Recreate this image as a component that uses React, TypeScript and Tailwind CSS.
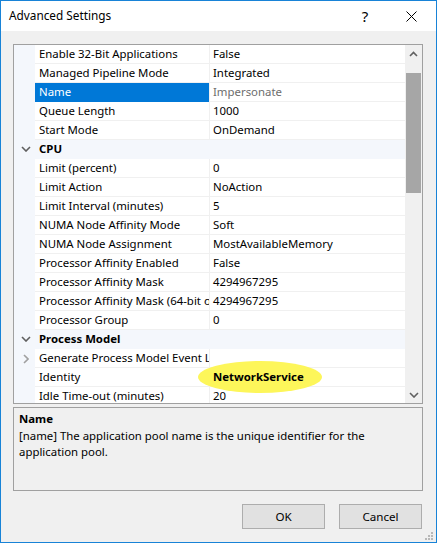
import React from "react"

type Row =
  | { kind: "cat"; label: string }
  | { kind: "item"; name: string; value: string; selected?: boolean; bold?: boolean; expander?: boolean; mark?: boolean }

const ROWS: Row[] = [
  { kind: "item", name: "Enable 32-Bit Applications", value: "False" },
  { kind: "item", name: "Managed Pipeline Mode", value: "Integrated" },
  { kind: "item", name: "Name", value: "Impersonate", selected: true },
  { kind: "item", name: "Queue Length", value: "1000" },
  { kind: "item", name: "Start Mode", value: "OnDemand" },
  { kind: "cat", label: "CPU" },
  { kind: "item", name: "Limit (percent)", value: "0" },
  { kind: "item", name: "Limit Action", value: "NoAction" },
  { kind: "item", name: "Limit Interval (minutes)", value: "5" },
  { kind: "item", name: "NUMA Node Affinity Mode", value: "Soft" },
  { kind: "item", name: "NUMA Node Assignment", value: "MostAvailableMemory" },
  { kind: "item", name: "Processor Affinity Enabled", value: "False" },
  { kind: "item", name: "Processor Affinity Mask", value: "4294967295" },
  { kind: "item", name: "Processor Affinity Mask (64-bit option)", value: "4294967295" },
  { kind: "item", name: "Processor Group", value: "0" },
  { kind: "cat", label: "Process Model" },
  { kind: "item", name: "Generate Process Model Event Log Entry", value: "", expander: true },
  { kind: "item", name: "Identity", value: "NetworkService", bold: true, mark: true },
  { kind: "item", name: "Idle Time-out (minutes)", value: "20" },
]

function ChevronDown({ color = "#5f5f5f" }: { color?: string }) {
  return (
    <svg width="10" height="6" viewBox="0 0 10 6">
      <path d="M1 1l4 4 4-4" fill="none" stroke={color} strokeWidth="1.6" />
    </svg>
  )
}

function ChevronRight() {
  return (
    <svg width="6" height="10" viewBox="0 0 6 10">
      <path d="M1 1l4 4-4 4" fill="none" stroke="#a0a0a0" strokeWidth="1.6" />
    </svg>
  )
}

function GridRow({ row }: { row: Row }) {
  if (row.kind === "cat") {
    return (
      <div className="flex h-[19px] bg-[#f4f7fc] border-b border-[#f4f7fc]">
        <div className="w-[21px] flex items-center justify-center pl-[2px]">
          <ChevronDown />
        </div>
        <div className="pl-[4px] font-bold leading-[18px] text-black">{row.label}</div>
      </div>
    )
  }
  return (
    <div className="flex h-[19px]">
      <div className="w-[21px] shrink-0 bg-[#f4f7fc] flex items-center justify-center pl-[3px]">
        {row.expander && <ChevronRight />}
      </div>
      <div
        className={`w-[174px] shrink-0 pl-[4px] overflow-hidden whitespace-nowrap leading-[18px] border-b ${
          row.selected ? "bg-[#0078d7] text-white border-[#0078d7]" : "bg-white text-black border-[#f0f0f0]"
        }`}
      >
        {row.name}
      </div>
      <div className="w-px shrink-0 bg-[#f0f0f0]" />
      <div
        className={`relative flex-1 pl-[3px] whitespace-nowrap leading-[18px] bg-white border-b border-[#f0f0f0] ${
          row.selected ? "text-[#6d6d6d]" : "text-black"
        } ${row.bold ? "font-bold" : ""}`}
      >
        {row.mark && (
          <span className="absolute left-[-12px] top-[-7px] w-[124px] h-[32px] rounded-[50%] bg-[#fdf65a] z-10" />
        )}
        <span className="relative z-20">{row.value}</span>
      </div>
    </div>
  )
}

export default function App() {
  return (
    <div
      className="w-[439px] h-[545px] bg-white text-[11.4px]"
      style={{ fontFamily: '"Noto Sans", "Segoe UI", sans-serif' }}
    >
      <div className="w-[437px] h-[543px] border border-[#1883d7] flex flex-col bg-[#f0f0f0]">
        {/* Title bar */}
        <div className="h-[30px] bg-white flex items-center shrink-0">
          <div className="pl-[8px] text-[11.8px] text-black flex-1">Advanced Settings</div>
          <div className="w-[46px] text-center text-[15px] text-black leading-none">?</div>
          <div className="w-[46px] flex items-center justify-center mr-[2px]">
            <svg width="11" height="11" viewBox="0 0 11 11">
              <path d="M0.5 0.5l10 10M10.5 0.5l-10 10" stroke="#000" strokeWidth="1" />
            </svg>
          </div>
        </div>

        {/* Property grid */}
        <div className="ml-[12px] mt-[13px] w-[410px] h-[360px] border border-[#a0a0a0] flex overflow-hidden shrink-0">
          <div className="flex-1 flex flex-col overflow-hidden">
            {ROWS.map((r, i) => (
              <GridRow key={i} row={r} />
            ))}
          </div>
          <div className="w-[17px] shrink-0 bg-[#f0f0f0] flex flex-col">
            <div className="h-[17px] flex items-center justify-center">
              <svg width="9" height="6" viewBox="0 0 9 6">
                <path d="M1 5l3.5-3.5L8 5" fill="none" stroke="#606060" strokeWidth="1.6" />
              </svg>
            </div>
            <div className="mt-[11px] mx-[1px] h-[120px] bg-[#a6a6a6]" />
            <div className="flex-1" />
            <div className="h-[17px] flex items-center justify-center">
              <ChevronDown color="#606060" />
            </div>
          </div>
        </div>

        {/* Description pane */}
        <div className="ml-[12px] mt-[3px] w-[410px] h-[84px] border border-[#a0a0a0] px-[5px] pt-[2px] text-black shrink-0">
          <div className="font-bold leading-[17px]">Name</div>
          <div className="leading-[16px] mt-[1px] pr-[20px]">
            [name] The application pool name is the unique identifier for the application pool.
          </div>
        </div>

        {/* Buttons */}
        <div className="flex justify-end gap-[14px] mt-[13px] mr-[14px]">
          <button className="w-[83px] h-[25px] bg-[#e1e1e1] border border-[#adadad] text-black text-[11.6px]">
            OK
          </button>
          <button className="w-[83px] h-[25px] bg-[#e1e1e1] border border-[#adadad] text-black text-[11.6px]">
            Cancel
          </button>
        </div>

        <div className="flex-1 flex items-end justify-end pr-[3px] pb-[2px]">
          <svg width="9" height="9" viewBox="0 0 9 9">
            {[
              [7, 1],
              [4, 4],
              [7, 4],
              [1, 7],
              [4, 7],
              [7, 7],
            ].map(([x, y], i) => (
              <rect key={i} x={x} y={y} width="2" height="2" fill="#b8b8b8" />
            ))}
          </svg>
        </div>
      </div>
    </div>
  )
}
